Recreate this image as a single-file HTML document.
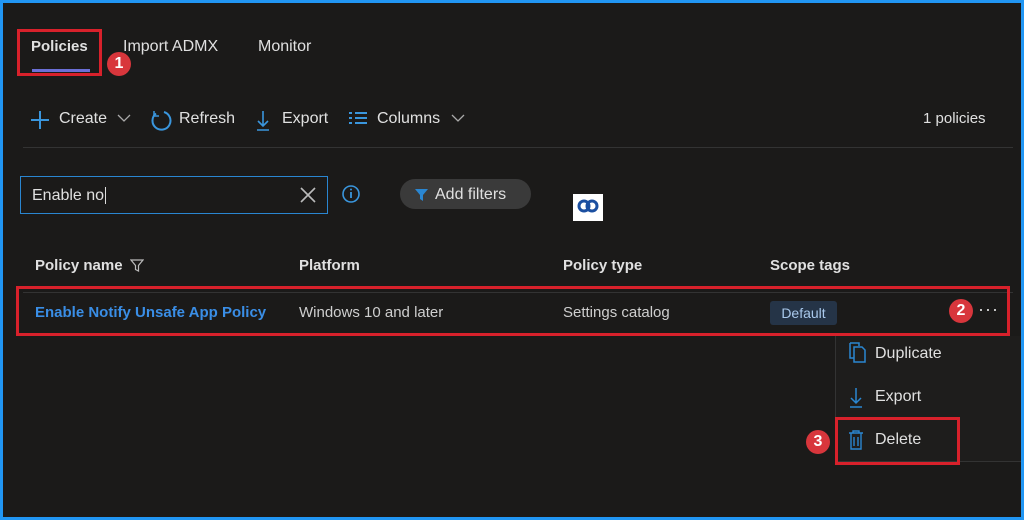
<!DOCTYPE html>
<html><head><meta charset="utf-8"><style>
*{margin:0;padding:0;box-sizing:border-box}
body{width:1024px;height:520px;background:#2196f3;font-family:"Liberation Sans",sans-serif;overflow:hidden;position:relative}
.main{position:absolute;left:3px;top:3px;width:1018px;height:514px;background:#1b1a19;color:#e6e6e6}
.a{position:absolute;white-space:nowrap}
.red{position:absolute;border:3px solid #d8212b}
.num{position:absolute;width:24px;height:24px;border-radius:50%;background:#d8363c;color:#fff;font-weight:bold;font-size:16px;text-align:center;line-height:24px}
.t{font-size:16px;color:#e0e0e0}
.b{font-weight:bold}
</style></head><body><div class="main">
<div class="a t b" style="left:28px;top:35px;font-size:15px">Policies</div>
<div class="a" style="left:29px;top:66px;width:58px;height:3px;background:#6b6fd6"></div>
<div class="a t" style="left:120px;top:35px">Import ADMX</div>
<div class="a t" style="left:255px;top:35px">Monitor</div>
<div class="red" style="left:14px;top:26px;width:85px;height:47px"></div>
<div class="num" style="left:104px;top:49px">1</div>

<svg class="a" style="left:26px;top:106px" width="22" height="22"><path d="M11 2v18M2 11h18" stroke="#3a96dd" stroke-width="2"/></svg>
<div class="a t" style="left:56px;top:107px">Create</div>
<svg class="a" style="left:114px;top:110px" width="14" height="10"><path d="M1 2l6 6 6-6" stroke="#aaa" fill="none" stroke-width="1.3"/></svg>
<svg class="a" style="left:147px;top:106px" width="22" height="22"><path d="M14 3A9 9 0 1 1 6 4.5" stroke="#3a96dd" fill="none" stroke-width="2"/><path d="M4 2v5h5" stroke="#3a96dd" fill="none" stroke-width="1.5"/></svg>
<div class="a t" style="left:176px;top:107px">Refresh</div>
<svg class="a" style="left:252px;top:106px" width="16" height="22"><path d="M8 2v15M3 12l5 5 5-5M2 21h12" stroke="#3a96dd" fill="none" stroke-width="1.6"/></svg>
<div class="a t" style="left:279px;top:107px">Export</div>
<svg class="a" style="left:345px;top:108px" width="20" height="16"><path d="M1 2h3M7 2h12M1 7h3M7 7h12M1 12h3M7 12h12" stroke="#3a96dd" stroke-width="2"/></svg>
<div class="a t" style="left:374px;top:107px">Columns</div>
<svg class="a" style="left:448px;top:110px" width="14" height="10"><path d="M1 2l6 6 6-6" stroke="#aaa" fill="none" stroke-width="1.3"/></svg>
<div class="a" style="left:920px;top:107px;font-size:15px;color:#e0e0e0">1 policies</div>
<div class="a" style="left:20px;top:144px;width:990px;height:1px;background:#333"></div>

<div class="a" style="left:17px;top:173px;width:308px;height:38px;border:1px solid #2a86d1"></div>
<div class="a t" style="left:29px;top:184px">Enable no<span style="border-left:1px solid #ddd;margin-left:1px"></span></div>
<svg class="a" style="left:296px;top:183px" width="18" height="18"><path d="M2 2l14 14M16 2L2 16" stroke="#bbb" stroke-width="1.6"/></svg>
<svg class="a" style="left:338px;top:181px" width="20" height="20"><circle cx="10" cy="10" r="8" stroke="#3a96dd" fill="none" stroke-width="1.6"/><path d="M10 8v6" stroke="#3a96dd" stroke-width="1.8"/><circle cx="10" cy="5.5" r="1" fill="#3a96dd"/></svg>
<div class="a" style="left:397px;top:176px;width:131px;height:30px;border-radius:15px;background:#3a3a3a"></div>
<svg class="a" style="left:411px;top:184px" width="16" height="16"><path d="M1 2h13l-5 6v6l-3-2V8z" fill="#2a86d1"/></svg>
<div class="a t" style="left:432px;top:183px">Add filters</div>
<div class="a" style="left:570px;top:191px;width:30px;height:27px;background:#fff"><svg width="30" height="27"><circle cx="11" cy="12" r="5" stroke="#1b4fa0" fill="none" stroke-width="3"/><circle cx="19" cy="12" r="5" stroke="#1b4fa0" fill="none" stroke-width="3"/></svg></div>

<div class="a b" style="left:32px;top:254px;font-size:15px;color:#e0e0e0">Policy name</div>
<svg class="a" style="left:127px;top:256px" width="14" height="14"><path d="M1 1h12l-4.5 5.5V12l-3-1.5V6.5z" stroke="#bbb" fill="none" stroke-width="1.2"/></svg>
<div class="a b" style="left:296px;top:254px;font-size:15px;color:#e0e0e0">Platform</div>
<div class="a b" style="left:560px;top:254px;font-size:15px;color:#e0e0e0">Policy type</div>
<div class="a b" style="left:767px;top:254px;font-size:15px;color:#e0e0e0">Scope tags</div>
<div class="a" style="left:20px;top:289px;width:990px;height:1px;background:#333"></div>
<div class="a b" style="left:32px;top:301px;font-size:15px;color:#3a8ee6">Enable Notify Unsafe App Policy</div>
<div class="a" style="left:296px;top:301px;font-size:15px;color:#cfcfcf">Windows 10 and later</div>
<div class="a" style="left:560px;top:301px;font-size:15px;color:#cfcfcf">Settings catalog</div>
<div class="a" style="left:767px;top:298px;width:67px;height:24px;background:#253447;border-radius:3px;color:#a9c8eb;font-size:14px;text-align:center;line-height:24px">Default</div>
<div class="a" style="left:975px;top:296px;font-size:18px;color:#ddd;letter-spacing:1px">···</div>
<div class="red" style="left:13px;top:283px;width:994px;height:50px"></div>
<div class="num" style="left:946px;top:296px">2</div>

<div class="a" style="left:832px;top:333px;width:186px;height:126px;background:#1e1d1c;border-left:1px solid #333;border-bottom:1px solid #333"></div>
<svg class="a" style="left:844px;top:338px" width="20" height="24"><path d="M3 2h9v3M3 2v15h4" stroke="#2a86d1" fill="none" stroke-width="1.5"/><path d="M7 6h8l3 3v12H7z" stroke="#2a86d1" fill="none" stroke-width="1.5"/></svg>
<div class="a t" style="left:872px;top:342px">Duplicate</div>
<svg class="a" style="left:845px;top:383px" width="16" height="22"><path d="M8 2v15M3 12l5 5 5-5M2 21h12" stroke="#2a86d1" fill="none" stroke-width="1.5"/></svg>
<div class="a t" style="left:872px;top:385px">Export</div>
<svg class="a" style="left:845px;top:426px" width="16" height="22"><path d="M1 4h14M5 4V2h6v2M3 4v16h10V4M6 8v9M10 8v9" stroke="#2a86d1" fill="none" stroke-width="1.4"/></svg>
<div class="a t" style="left:872px;top:428px">Delete</div>
<div class="red" style="left:832px;top:414px;width:125px;height:48px"></div>
<div class="num" style="left:803px;top:427px">3</div>
</div></body></html>
